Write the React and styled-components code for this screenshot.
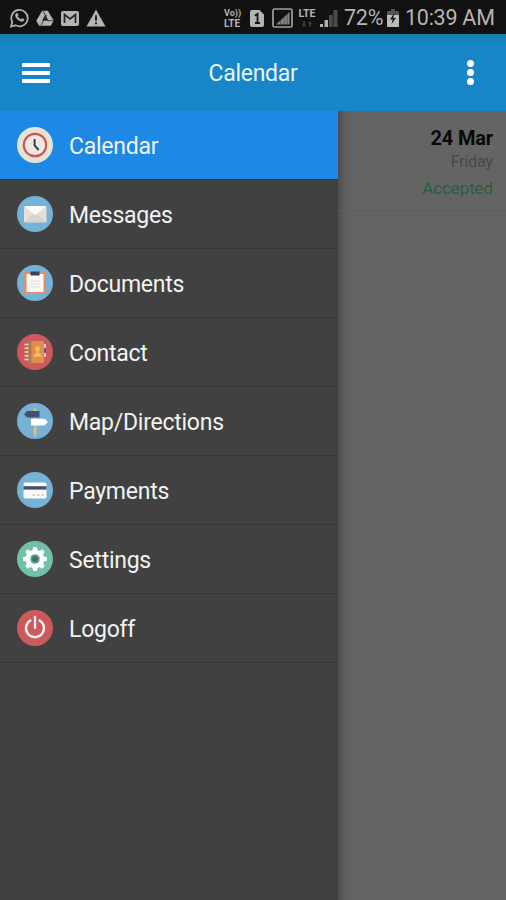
import React from "react";
import styled, { createGlobalStyle } from "styled-components";

const menus = [
    { name: "Calendar", color: "#e6e3d6", Icon: ClockIcon, active: true },
    { name: "Messages", color: "#76b2d6", Icon: MailIcon },
    { name: "Documents", color: "#76b2d6", Icon: ClipboardIcon },
    { name: "Contact", color: "#cc5a5c", Icon: ContactIcon },
    { name: "Map/Directions", color: "#76b2d6", Icon: SignpostIcon },
    { name: "Payments", color: "#76b2d6", Icon: CardIcon },
    { name: "Settings", color: "#72c0a8", Icon: GearIcon },
    { name: "Logoff", color: "#cc5a5c", Icon: PowerIcon },
];

export default function App() {
    return (
        <Screen>
            <GlobalStyle />
            <StatusBar />
            <Header>
                <MenuButton aria-label="menu">
                    <MenuLine />
                    <MenuLine />
                    <MenuLine />
                </MenuButton>
                <HeaderTitle>Calendar</HeaderTitle>
                <MoreButton aria-label="more">
                    <Dot />
                    <Dot />
                    <Dot />
                </MoreButton>
            </Header>
            <Body>
                <Drawer>
                    {menus.map(({ name, color, Icon, active }) => (
                        <DrawerItem key={name} $active={active}>
                            <IconCircle $color={color}>
                                <Icon />
                            </IconCircle>
                            <DrawerLabel>{name}</DrawerLabel>
                        </DrawerItem>
                    ))}
                </Drawer>
                <Content>
                    <Event>
                        <EventDate>24 Mar</EventDate>
                        <EventDay>Friday</EventDay>
                        <EventStatus>Accepted</EventStatus>
                    </Event>
                </Content>
            </Body>
        </Screen>
    );
}

function StatusBar() {
    return (
        <StatusContainer>
            <StatusGroup $gap="7px">
                <svg width="19" height="20" viewBox="0 0 19 20">
                    <path d="M1 18.600 2.300 14A8.200 8.200 0 1 1 5.600 17.300Z" fill="none" stroke="#adadad" strokeWidth="1.800" />
                    <path d="M6.300 5.200c.5-.5 1.200-.4 1.500.2l.7 1.600c.1.4-.6 1-.8 1.300.8 1.500 1.800 2.400 3.200 3 .4-.2.9-1.200 1.300-1.100l1.800.9c.5.3.2 1.300-.3 1.800-1 1-2.300.9-3.700.3-2.300-1-4-2.800-4.700-5-.3-1.200.1-2.300 1-3z" fill="#adadad" />
                </svg>
                <svg width="18" height="17" viewBox="0 0 18 17">
                    <path d="M6.200.8h5.600l5.900 9.700-2.900 5.300H3.200L.3 10.800Z" fill="#b4b4b4" />
                    <path d="M9 5.200 12 10.700H6Z" fill="#222" />
                    <path d="m7.200 1 4.800 9.700h5.500M5 15.300l2.500-4.600L10.500 5" fill="none" stroke="#222" strokeWidth=".8" />
                </svg>
                <svg width="18" height="15" viewBox="0 0 18 15">
                    <rect width="18" height="15" rx="2" fill="#b4b4b4" />
                    <path d="M3.500 12V3.500L9 8l5.500-4.500V12" fill="none" stroke="#222" strokeWidth="1.700" />
                </svg>
                <svg width="20" height="18" viewBox="0 0 20 18">
                    <path d="M10 .5 19.500 17.500H.5Z" fill="#b4b4b4" />
                    <path d="M10 6.300v5.500M10 13.300v2" stroke="#222" strokeWidth="2" />
                </svg>
            </StatusGroup>
            <StatusGroup>
                <NetworkLabel>
                    <span>Vo))</span>
                    <NetworkType>LTE</NetworkType>
                </NetworkLabel>
                <SimIcon width="14" height="17" viewBox="0 0 14 17">
                    <path d="M2 0h7.500L14 4.500V15a2 2 0 0 1-2 2H2a2 2 0 0 1-2-2V2a2 2 0 0 1 2-2Z" fill="#b4b4b4" />
                    <path d="M4.800 5.800 7.500 4v9M5 13h5" fill="none" stroke="#111" strokeWidth="1.800" />
                </SimIcon>
                <SignalIcon width="21" height="20" viewBox="0 0 21 20">
                    <rect x="1" y="1" width="19" height="18" rx="1.500" fill="none" stroke="#a0a0a0" strokeWidth="1.700" />
                    <path d="M4 16.500 17.500 4v12.500Z" fill="#858585" />
                    <path d="M8.500 12v5M12 9v8M15.200 6v11" stroke="#111" strokeWidth=".4" />
                </SignalIcon>
                <LteColumn>
                    <span>LTE</span>
                    <svg width="12" height="6" viewBox="0 0 12 6">
                        <path d="M1 3.500 3 6l2-2.500H3.700V0H2.300v3.500ZM7 2.500 9 0l2 2.500H9.700V6H8.300V2.500Z" fill="#454545" />
                    </svg>
                </LteColumn>
                <BarsIcon width="18" height="18" viewBox="0 0 18 18">
                    <path d="M0 15h3v3H0zM4.500 11h3.500v7H4.500z" fill="#b0b0b0" />
                    <path d="M9 6h3.800v12H9zM13.500 1h4v17h-4z" fill="#4b4b4b" />
                </BarsIcon>
                <StatusText $width="40px">72%</StatusText>
                <BatteryIcon width="12" height="18" viewBox="0 0 12 18">
                    <path d="M4 0h4v2h3a1 1 0 0 1 1 1v14a1 1 0 0 1-1 1H1a1 1 0 0 1-1-1V3a1 1 0 0 1 1-1h3Z" fill="#555" />
                    <path d="M0 6h12v11a1 1 0 0 1-1 1H1a1 1 0 0 1-1-1Z" fill="#bbb" />
                    <path d="M7.500 4 3 10.500h2.700L4.500 15 9 9H6.300Z" fill="#111" />
                </BatteryIcon>
                <StatusText $width="88px">10:39 AM</StatusText>
            </StatusGroup>
        </StatusContainer>
    );
}

function ClockIcon() {
    return (
        <svg width="36" height="36" viewBox="0 0 36 36">
            <circle cx="18" cy="18" r="11.200" fill="#eceadf" stroke="#c9575a" strokeWidth="2.200" />
            <path d="M17.600 12v6.500l4 4.500" fill="none" stroke="#2d3857" strokeWidth="1.900" />
        </svg>
    );
}

function MailIcon() {
    return (
        <svg width="36" height="36" viewBox="0 0 36 36">
            <rect x="7" y="10" width="22.500" height="16.500" rx="1.500" fill="#e4e1d7" />
            <path d="m7.500 26 8-7.500h5.500l8 7.500Z" fill="#d8d4c8" />
            <path d="M7.500 10h21.500L19.600 18.300a2 2 0 0 1-2.700 0Z" fill="#fbfaf7" />
        </svg>
    );
}

function ClipboardIcon() {
    return (
        <svg width="36" height="36" viewBox="0 0 36 36">
            <rect x="7" y="7" width="22" height="22" rx="1.500" fill="#dd9164" />
            <path d="M9.500 9h17v18h-17z" fill="#fbf9f5" />
            <path d="M13 16h10M13 19h10M13 22h10" stroke="#dedfd9" strokeWidth="1.200" />
            <path d="M13.500 6.500h9v4h-9Z" fill="#354362" />
        </svg>
    );
}

function ContactIcon() {
    return (
        <svg width="36" height="36" viewBox="0 0 36 36">
            <path d="M27 10h2v4h-2zM27 19h2v4h-2z" fill="#cfd2dc" />
            <path d="M27 14.500h2v4h-2z" fill="#525875" />
            <rect x="10.500" y="7" width="16.500" height="22" rx="1.500" fill="#e08e49" />
            <path d="M11 7h3.300v22H11z" fill="#aa784f" />
            <path d="M7.500 10.500h4M7.500 14.200h4M7.500 18h4M7.500 21.800h4M7.500 25.500h4" stroke="#eed9ce" strokeWidth="1.500" />
            <circle cx="20.500" cy="14.800" r="2.500" fill="#f4bb69" />
            <path d="M19.500 16.500h2v2.500c2 .4 3.200 1.500 3.200 3.800h-8.400c0-2.300 1.200-3.400 3.200-3.800Z" fill="#f4bb69" />
        </svg>
    );
}

function SignpostIcon() {
    return (
        <svg width="36" height="36" viewBox="0 0 36 36">
            <path d="M16.800 5.500h2.600v27.500h-2.600z" fill="#e6bd75" />
            <path d="m7 11.200 3-3.200h12.500v6.500H10Z" fill="#454f70" />
            <path d="M14 15.800h13.500l3.500 3.300-3.500 3.300H14Z" fill="#fff" />
        </svg>
    );
}

function CardIcon() {
    return (
        <svg width="36" height="36" viewBox="0 0 36 36">
            <rect x="6.500" y="10.500" width="23" height="16" rx="2" fill="#fafafa" />
            <path d="M6.500 14.200h23v3.400h-23z" fill="#454f70" />
            <path d="M15.500 23h2.500M20 23h2.500M24.500 23H27" stroke="#edc9b7" strokeWidth="2" />
        </svg>
    );
}

function GearIcon() {
    return (
        <svg width="36" height="36" viewBox="0 0 36 36">
            <g fill="#fafdfb">
                {[0, 45, 90, 135].map((deg) => (
                    <path key={deg} d="M16.300 6h3.400l1.300 5v14l-1.300 5h-3.400L15 25V11Z" transform={`rotate(${deg} 18 18)`} />
                ))}
                <circle cx="18" cy="18" r="9.300" />
            </g>
            <circle cx="18" cy="18" r="4.800" fill="#68a397" />
            <circle cx="18" cy="18" r="3" fill="#3f6f77" />
        </svg>
    );
}

function PowerIcon() {
    return (
        <svg width="36" height="36" viewBox="0 0 36 36">
            <path d="M13.400 10.500a9 9 0 1 0 9.200 0M18 6.800V18" fill="none" stroke="#fbefef" strokeWidth="2.300" strokeLinecap="round" />
        </svg>
    );
}

const GlobalStyle = createGlobalStyle`
    * {
        box-sizing: border-box;
    }

    body {
        margin: 0;
        font-family: Roboto, "Liberation Sans", sans-serif;
    }
`;

const Screen = styled.div`
    display: flex;
    flex-direction: column;
    width: 506px;
    height: 900px;
    overflow: hidden;
    background: #646464;
`;

const StatusContainer = styled.div`
    display: flex;
    justify-content: space-between;
    align-items: center;
    flex-shrink: 0;
    height: 34px;
    padding: 2px 13px 0 10px;
    background: #111;
    color: #b4b4b4;
`;

const StatusGroup = styled.div`
    display: flex;
    align-items: center;
    gap: ${({ $gap }) => $gap || 0};
`;

const NetworkLabel = styled.div`
    display: flex;
    flex-direction: column;
    width: 26px;
    font-size: 9px;
    font-weight: 700;
    line-height: 10px;
    white-space: nowrap;
`;

const NetworkType = styled.span`
    font-size: 10px;
    line-height: 11px;
`;

const SimIcon = styled.svg`
    margin-right: 8px;
`;

const SignalIcon = styled.svg`
    margin-right: 5px;
`;

const LteColumn = styled.div`
    display: flex;
    flex-direction: column;
    align-items: center;
    gap: 2px;
    width: 18px;
    margin-right: 4px;
    font-size: 10.5px;
    font-weight: 700;
    line-height: 10px;
`;

const BarsIcon = styled.svg`
    margin-right: 6px;
`;

const BatteryIcon = styled.svg`
    margin: 0 6px 0 3px;
`;

const StatusText = styled.span`
    width: ${({ $width }) => $width};
    font-size: 21.5px;
    letter-spacing: -0.25px;
    line-height: 26px;
    white-space: nowrap;
`;

const Header = styled.header`
    display: flex;
    justify-content: space-between;
    align-items: center;
    flex-shrink: 0;
    height: 77px;
    padding: 0 22px;
    background: linear-gradient(#187fae, #1785c7 12px);
`;

const MenuButton = styled.button`
    display: flex;
    flex-direction: column;
    gap: 4px;
    width: 28px;
    padding: 0;
    border: none;
    background: none;
`;

const MenuLine = styled.span`
    height: 4px;
    border-radius: 1px;
    background: #fff;
`;

const HeaderTitle = styled.h1`
    margin: 3px 0 0;
    color: #e8f4fc;
    font-size: 23px;
    font-weight: 400;
    letter-spacing: -0.3px;
    line-height: 28px;
`;

const MoreButton = styled.button`
    display: flex;
    flex-direction: column;
    align-items: center;
    gap: 2px;
    width: 28px;
    padding: 0 0 0 2px;
    border: none;
    background: none;
`;

const Dot = styled.span`
    width: 7px;
    height: 7px;
    border-radius: 50%;
    background: #fff;
`;

const Body = styled.main`
    display: flex;
    flex: 1;
`;

const Drawer = styled.nav`
    width: 338px;
    background: #414141;
`;

const DrawerItem = styled.div`
    display: flex;
    align-items: center;
    gap: 16px;
    height: 69px;
    padding: 0 17px;
    border-bottom: 1px solid #363636;
    background: ${({ $active }) => ($active ? "#1e88e5" : "transparent")};
`;

const IconCircle = styled.span`
    display: flex;
    width: 36px;
    height: 36px;
    border-radius: 50%;
    background: ${({ $color }) => $color};
`;

const DrawerLabel = styled.span`
    padding-top: 4px;
    color: #f2f2f2;
    font-size: 23px;
    letter-spacing: -0.25px;
    line-height: 28px;
`;

const Content = styled.section`
    flex: 1;
    background: linear-gradient(to right, #4e4e4e, #606060 8px, #646464 16px);
`;

const Event = styled.div`
    display: flex;
    flex-direction: column;
    align-items: flex-end;
    height: 100px;
    padding: 14px 13px 0 0;
    border-bottom: 1px solid #5e5e5e;
`;

const EventDate = styled.strong`
    color: #090909;
    font-size: 20px;
    font-weight: 700;
    letter-spacing: -0.15px;
    line-height: 26px;
`;

const EventDay = styled.span`
    color: #474747;
    font-size: 15.7px;
    line-height: 22px;
`;

const EventStatus = styled.span`
    margin-top: 4px;
    color: #285f3e;
    font-size: 16.8px;
    line-height: 22px;
`;
